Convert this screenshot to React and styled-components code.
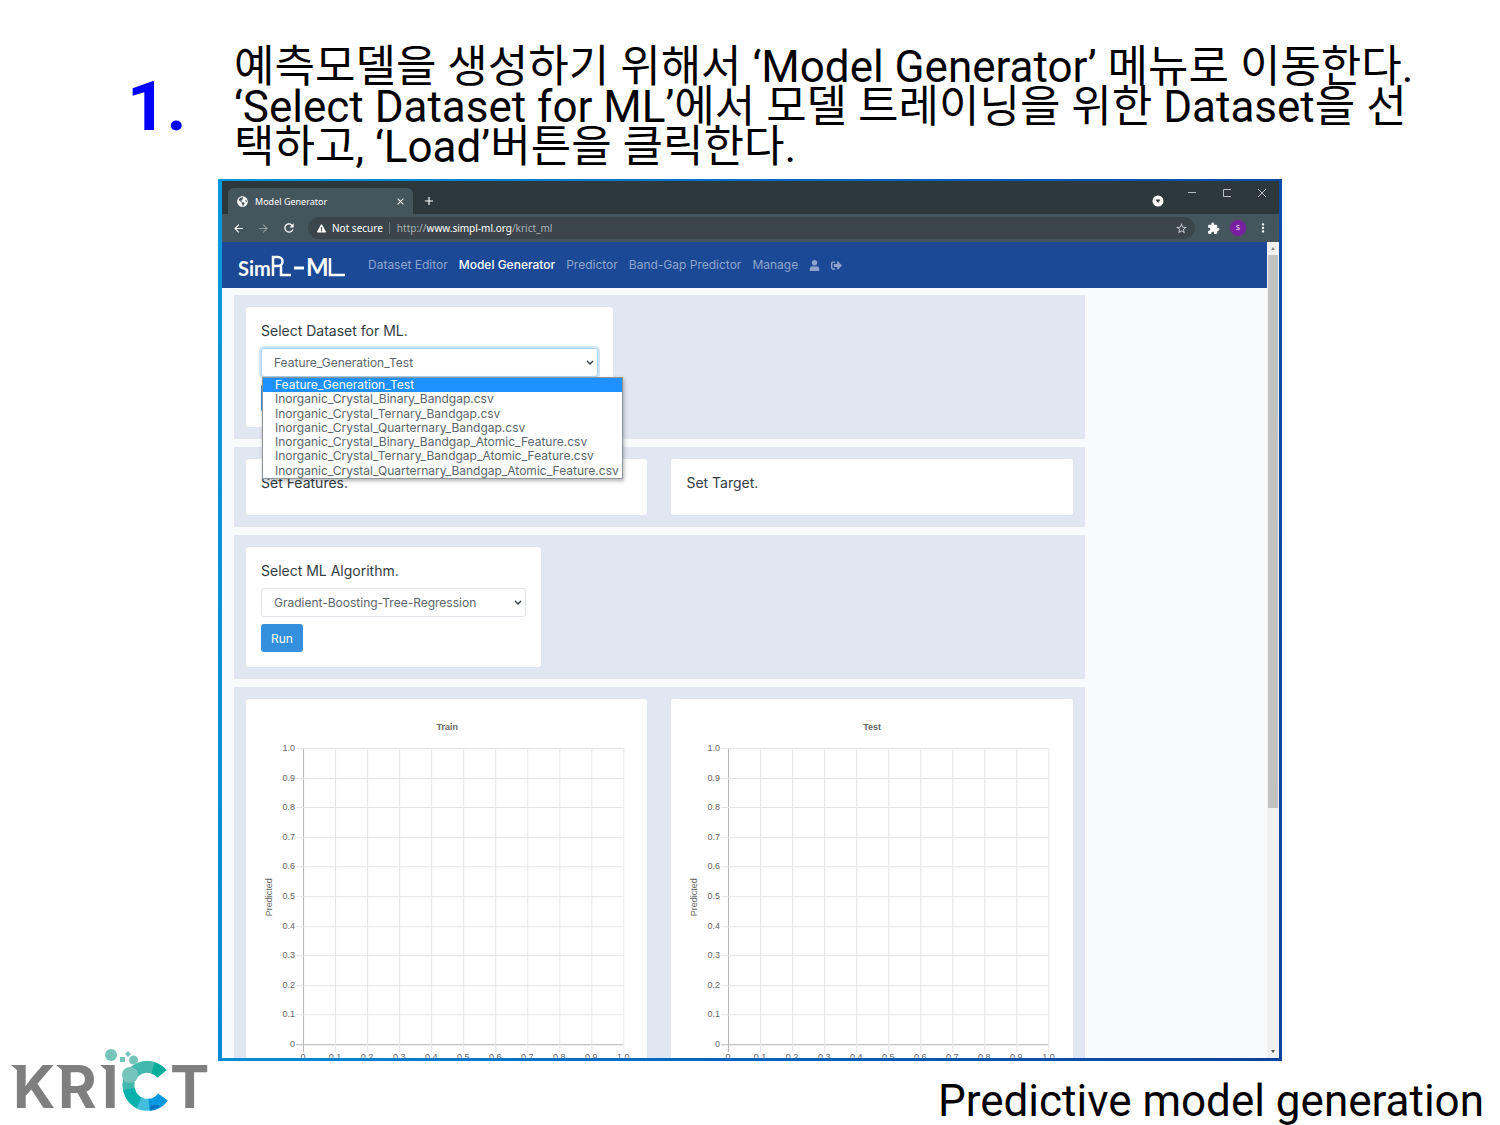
import styled, { createGlobalStyle, css } from "styled-components"
import { useState } from "react"
import { FaUser, FaSignOutAlt, FaExclamationTriangle, FaGlobeAmericas } from "react-icons/fa"
import { MdArrowBack, MdArrowForward, MdRefresh, MdStarBorder, MdMoreVert, MdAdd, MdClose, MdExtension } from "react-icons/md"

const GlobalStyle = createGlobalStyle`
  * {
    box-sizing: border-box;
  }

  body {
    margin: 0;
    background-color: #ffffff;
    color: #000000;
    font-family: Roboto, "Noto Sans CJK KR", sans-serif;
  }

  button, select {
    font-family: inherit;
  }
`

const Slide = styled.div`
  height: 100vh;
  min-height: 600px;
  display: flex;
  flex-direction: column;
  overflow: hidden;
`

/* ---------- slide heading ---------- */

const Heading = styled.header`
  display: flex;
  padding: 47px 0 12px;
`

const Step = styled.div`
  flex: 0 0 234px;
  padding-left: 127px;
  font-size: 69px;
  line-height: 120px;
  font-weight: 700;
  color: #0000ff;
`

const Instruction = styled.h1`
  flex: 1;
  margin: 0;
  font-size: 44px;
  line-height: 40px;
  font-weight: 400;
  white-space: nowrap;
`

const InstructionLine = styled.span`
  display: block;
`

/* ---------- browser window ---------- */

const Desktop = styled.main`
  flex: 1;
  min-height: 0;
  margin: 0 218px;
  padding: 2px 3px 3px 4px;
  display: flex;
  background: linear-gradient(100deg, #0a98dc, #0568bf 50%, #0a429f);
`

const Browser = styled.div`
  flex: 1;
  min-width: 0;
  display: flex;
  flex-direction: column;
  overflow: hidden;
  font-family: "Noto Sans", sans-serif;
`

const TabBar = styled.div`
  height: 33px;
  flex: none;
  display: flex;
  align-items: flex-end;
  padding: 0 12px 0 6px;
  background-color: #2d383d;
  color: #ffffff;
`

const Tab = styled.div`
  width: 185px;
  height: 26px;
  display: flex;
  align-items: center;
  gap: 7px;
  padding: 0 7px 0 9px;
  border-radius: 6px 6px 0 0;
  background-color: #45555d;
  font-size: 9px;
`

const TabTitle = styled.span`
  flex: 1;
`

const IconButton = styled.button`
  display: flex;
  align-items: center;
  justify-content: center;
  padding: 0;
  border: none;
  background: none;
  color: ${props => props.$color || "#ffffff"};
`

const NewTab = styled(IconButton)`
  height: 26px;
  margin-left: 9px;
`

const TabSearch = styled(IconButton)`
  height: 26px;
  margin-left: auto;
`

const WindowButtons = styled.div`
  display: flex;
  gap: 25px;
  margin-left: 23px;
  align-self: flex-start;
  padding-top: 7px;
`

const Toolbar = styled.div`
  height: 28px;
  flex: none;
  display: flex;
  align-items: center;
  gap: 12px;
  padding: 0 9px 0 10px;
  background-color: #45555d;
`

const AddressBar = styled.div`
  flex: 1;
  height: 22px;
  display: flex;
  align-items: center;
  padding: 0 7px 0 9px;
  border-radius: 11px;
  background-color: #3a464c;
  color: #a9b1b5;
  font-size: 10px;
  white-space: nowrap;
`

const Toolset = styled.div`
  display: flex;
  align-items: center;
  gap: 10px;
`

const NotSecure = styled.span`
  margin-left: 6px;
  padding-right: 6px;
  border-right: 1px solid #68757b;
  line-height: 12px;
  color: #ffffff;
`

const Url = styled.span`
  flex: 1;
  padding-left: 7px;
`

const Host = styled.span`
  color: #ffffff;
`

const Avatar = styled.button`
  width: 16px;
  height: 16px;
  padding: 0;
  border: none;
  border-radius: 50%;
  background-color: #7b1fa2;
  color: #ffffff;
  font-size: 7px;
  line-height: 16px;
`

const Viewport = styled.div`
  flex: 1;
  min-height: 0;
  display: flex;
`

const Page = styled.div`
  flex: 1;
  min-width: 0;
  overflow: hidden;
  background-color: #f9fafc;
  font-family: Inter, sans-serif;
`

const ScrollBar = styled.div`
  flex: 0 0 12px;
  display: flex;
  flex-direction: column;
  align-items: center;
  background-color: #f1f1f1;
`

const ScrollArrow = styled.svg`
  flex: none;
  width: 12px;
  height: 13px;
`

const ScrollTrack = styled.div`
  flex: 1;
  width: 10px;
`

const ScrollThumb = styled.div`
  height: 70%;
  background-color: #c1c1c1;
`

/* ---------- site ---------- */

const Navbar = styled.nav`
  height: 46px;
  display: flex;
  align-items: center;
  padding: 0 16px;
  background-color: #1c4996;
`

const Brand = styled.a`
  display: flex;
  margin-right: 22px;
`

const NavLinks = styled.div`
  display: flex;
  align-items: center;
  gap: 11px;
`

const NavLink = styled.a`
  display: flex;
  font-size: 12px;
  line-height: 16px;
  text-decoration: none;
  color: #8fa5cd;
  white-space: nowrap;

  ${props => props.$active && css`
    color: #ffffff;
    font-weight: 500;
  `}
`

const Content = styled.div`
  display: grid;
  grid-template-columns: 10fr 2fr;
  padding: 7px 12px;
`

const Panels = styled.div`
  display: flex;
  flex-direction: column;
  gap: 8px;
`

const Panel = styled.section`
  display: grid;
  grid-template-columns: ${props => props.$split ? "1fr 1fr" : "max-content"};
  gap: 24px;
  padding: 12px;
  background-color: #e1e7f2;
`

const Card = styled.div`
  padding: ${props => props.$flush ? "0" : "16px 15px 15px"};
  border-radius: 3px;
  background-color: #ffffff;
`

const titleStyle = css`
  display: block;
  margin: 0 0 9px;
  font-size: 14px;
  line-height: 16px;
  font-weight: 400;
  color: #343c44;
`

const CardLabel = styled.label`${titleStyle}`

const CardTitle = styled.h2`${titleStyle}`

const SelectWrap = styled.div`
  position: relative;
  width: ${props => props.$wide ? "337px" : "265px"};
  margin-bottom: 7px;
`

const Select = styled.select`
  display: block;
  width: 100%;
  height: 29px;
  padding: 0 12px;
  border: 1px solid #dfe3e8;
  border-radius: 3px;
  appearance: none;
  background-color: #ffffff;
  color: #5d656d;
  font-size: 12px;

  ${props => props.$focused && css`
    border-color: #a9d4f3;
    box-shadow: 0 0 0 2px #cfe5f6;
  `}
`

const Chevron = styled.svg`
  position: absolute;
  right: 4px;
  top: 12px;
  width: 8px;
  height: 6px;
  pointer-events: none;
`

const OptionList = styled.ul`
  position: absolute;
  z-index: 2;
  top: 100%;
  left: 1px;
  height: 102px;
  display: grid;
  grid-auto-rows: 1fr;
  margin: 0;
  padding: 0;
  border: 1px solid #8d949a;
  background-color: #ffffff;
  box-shadow: 1px 2px 4px rgba(0, 0, 0, 0.3);
  list-style: none;
`

const Option = styled.li`
  width: 359px;
  padding-left: 12px;
  font-size: 12px;
  line-height: 14px;
  white-space: nowrap;
  color: ${props => props.$selected ? "#ffffff" : "#5d656d"};
  background-color: ${props => props.$selected ? "#1e90ff" : "transparent"};
`

const Button = styled.button`
  display: block;
  height: 28px;
  padding: 0 10px;
  border: none;
  border-radius: 3px;
  background-color: #3490dc;
  color: #ffffff;
  font-size: 12px;
`

const ChartSvg = styled.svg`
  display: block;
  width: 100%;
  font-family: "Liberation Sans", sans-serif;
  font-size: 9px;
  fill: #666666;
`

/* ---------- slide footer ---------- */

const Footer = styled.footer`
  flex: 0 0 64px;
  display: flex;
  align-items: flex-end;
  justify-content: space-between;
  padding: 0 16px 0 8px;
`

const Caption = styled.p`
  margin: 0;
  font-size: 44px;
  line-height: 48px;
`

const LogoSvg = styled.svg`
  flex: none;
  width: 204px;
  height: 80px;
  margin-top: -16px;
`

const links = ["Dataset Editor", "Model Generator", "Predictor", "Band-Gap Predictor", "Manage"]

const datasets = [
  "Feature_Generation_Test",
  "Inorganic_Crystal_Binary_Bandgap.csv",
  "Inorganic_Crystal_Ternary_Bandgap.csv",
  "Inorganic_Crystal_Quarternary_Bandgap.csv",
  "Inorganic_Crystal_Binary_Bandgap_Atomic_Feature.csv",
  "Inorganic_Crystal_Ternary_Bandgap_Atomic_Feature.csv",
  "Inorganic_Crystal_Quarternary_Bandgap_Atomic_Feature.csv",
]

const ticks = ["0", "0.1", "0.2", "0.3", "0.4", "0.5", "0.6", "0.7", "0.8", "0.9", "1.0"]

const SimplLogo = () => (
  <svg width="108" height="26" viewBox="0 0 108 26" fill="#ffffff" role="img" aria-label="SimPL-ML">
    <g fontFamily="Lato, sans-serif" fontWeight="700">
      <text x="0" y="24" fontSize="20">Sim</text>
      <text x="68" y="24" fontSize="24">M</text>
    </g>
    <g fill="none" stroke="#ffffff" strokeWidth="3">
      <path d="M35 24V5h5a4 4 0 0 1 0 9h-5M43 13v10h10" strokeWidth="2.500" />
      <path d="M56 16h10" />
      <path d="M92 6v17h15" strokeWidth="2.500" />
    </g>
  </svg>
)

const KrictLogo = () => (
  <LogoSvg viewBox="8 1045 204 80" role="img" aria-label="KRICT">
    <g fill="#7f7f7f" fontFamily="Inter, sans-serif" fontWeight="700" fontSize="59">
      <text y="1108" x="13 58 102 170">KRIT</text>
      <path d="M11 1065h10v14h-4v-9zM56 1065h10v14h-4v-9zM100 1065h10v14h-4v-9z" />
    </g>
    <g fill="#75c5bd">
      <circle cx="111" cy="1055" r="6" />
      <rect x="120" y="1057" width="5" height="5" />
      <path d="M128 1051l3 3-3 3-3-3z" />
      <circle cx="133.500" cy="1060" r="4.500" />
    </g>
    <g fill="none" strokeWidth="12">
      <path d="M130 1078a19 19 0 0 1 24-10" stroke="#43b9ae" />
      <path d="M153 1068a19 19 0 0 1 9 6" stroke="#06ad99" />
      <path d="M129 1090a19 19 0 0 1 0-10" stroke="#43b9ae" />
      <path d="M142 1104a19 19 0 0 1-13-15" stroke="#06b0ac" />
      <path d="M152 1104a19 19 0 0 1-13-1" stroke="#43bfdc" />
      <path d="M163 1097a19 19 0 0 1-14 8" stroke="#0a98de" />
    </g>
    <path d="M151 1105h7l2 2-7 3h-3z" fill="#0573c4" />
    <circle cx="130" cy="1075" r="8" fill="#75c5bd" />
  </LogoSvg>
)

const SelectArrow = () => (
  <Chevron viewBox="0 0 8 6">
    <path d="M1 1l3 3 3-3" fill="none" stroke="#3b444c" strokeWidth="1.500" />
  </Chevron>
)

// empty scatter chart, both axes run from 0 to 1
const Chart = ({ title }) => {
  const left = 57
  const top = 49
  const width = 320
  const height = 296

  return (
    <ChartSvg viewBox="0 0 401 390">
      <text x={left + width / 2 - 16} y="31" textAnchor="middle" fontWeight="700">{title}</text>
      <text transform="translate(26 198) rotate(-90)" textAnchor="middle">Predicted</text>
      {ticks.map((tick, i) => {
        const x = left + Math.round(width * i / 10)
        const y = top + Math.round(height * (10 - i) / 10)
        return (
          <g key={tick}>
            <path
              d={`M${x + 0.5} ${top}V${top + height + 8}`}
              stroke={i === 0 ? "#b5b5b5" : "#e5e5e5"}
            />
            <path
              d={`M${left - 7} ${y + 0.5}H${left + width}`}
              stroke={i === 0 ? "#b5b5b5" : "#e5e5e5"}
            />
            <text x={left - 8} y={y + 3} textAnchor="end">{tick}</text>
            <text x={x} y={top + height + 16} textAnchor="middle">{tick}</text>
          </g>
        )
      })}
    </ChartSvg>
  )
}

const BrowserChrome = () => (
  <>
    <TabBar>
      <Tab>
        <FaGlobeAmericas size={11} />
        <TabTitle>Model Generator</TabTitle>
        <IconButton aria-label="Close tab"><MdClose size={11} /></IconButton>
      </Tab>
      <NewTab aria-label="New tab"><MdAdd size={14} /></NewTab>
      <TabSearch aria-label="Search tabs">
        <svg width="12" height="12" viewBox="0 0 12 12">
          <circle cx="6" cy="6" r="5.500" fill="#ffffff" />
          <path d="M3.500 4.500h5L6 8z" fill="#2d383d" />
        </svg>
      </TabSearch>
      <WindowButtons>
        <IconButton aria-label="Minimize">
          <svg width="10" height="10" viewBox="0 0 10 10"><path d="M1 4.500h8" stroke="#b9bfc2" /></svg>
        </IconButton>
        <IconButton aria-label="Maximize">
          <svg width="10" height="10" viewBox="0 0 10 10"><path d="M9 1.500H1.500v7H9" fill="none" stroke="#b9bfc2" /></svg>
        </IconButton>
        <IconButton aria-label="Close">
          <svg width="10" height="10" viewBox="0 0 10 10"><path d="M1 1l8 8M9 1l-8 8" stroke="#b9bfc2" /></svg>
        </IconButton>
      </WindowButtons>
    </TabBar>
    <Toolbar>
      <IconButton aria-label="Back"><MdArrowBack size={13} /></IconButton>
      <IconButton aria-label="Forward" $color="#929ca1"><MdArrowForward size={13} /></IconButton>
      <IconButton aria-label="Reload"><MdRefresh size={14} /></IconButton>
      <AddressBar>
        <FaExclamationTriangle size={9} color="#ffffff" />
        <NotSecure>Not secure</NotSecure>
        <Url>http://<Host>www.simpl-ml.org</Host>/krict_ml</Url>
        <IconButton aria-label="Bookmark" $color="#c3c9cc"><MdStarBorder size={13} /></IconButton>
      </AddressBar>
      <Toolset>
        <IconButton aria-label="Extensions"><MdExtension size={13} /></IconButton>
        <Avatar>S</Avatar>
        <IconButton aria-label="Menu"><MdMoreVert size={14} /></IconButton>
      </Toolset>
    </Toolbar>
  </>
)

const ModelGenerator = () => {
  const [dataset, setDataset] = useState(datasets[0]);
  const [open, setOpen] = useState(true);

  return (
    <Panels>
      <Panel>
        <Card>
          <CardLabel htmlFor="dataset">Select Dataset for ML.</CardLabel>
          <SelectWrap $wide>
            <Select id="dataset" $focused={open} value={dataset} onChange={e => setDataset(e.target.value)}>
              {datasets.map(name => <option key={name}>{name}</option>)}
            </Select>
            <SelectArrow />
            {open &&
              <OptionList role="listbox">
                {datasets.map(name => (
                  <Option
                    key={name}
                    role="option"
                    aria-selected={name === dataset}
                    $selected={name === dataset}
                    onClick={() => {
                      setDataset(name)
                      setOpen(false)
                    }}
                  >
                    {name}
                  </Option>
                ))}
              </OptionList>
            }
          </SelectWrap>
          <Button>Load</Button>
        </Card>
      </Panel>

      <Panel $split>
        <Card>
          <CardTitle>Set Features.</CardTitle>
        </Card>
        <Card>
          <CardTitle>Set Target.</CardTitle>
        </Card>
      </Panel>

      <Panel>
        <Card>
          <CardLabel htmlFor="algorithm">Select ML Algorithm.</CardLabel>
          <SelectWrap>
            <Select id="algorithm">
              <option>Gradient-Boosting-Tree-Regression</option>
            </Select>
            <SelectArrow />
          </SelectWrap>
          <Button>Run</Button>
        </Card>
      </Panel>

      <Panel $split>
        <Card $flush><Chart title="Train" /></Card>
        <Card $flush><Chart title="Test" /></Card>
      </Panel>
    </Panels>
  )
}

const App = () => {
  return (
    <Slide>
      <GlobalStyle />
      <Heading>
        <Step>1.</Step>
        <Instruction lang="ko">
          <InstructionLine>예측모델을 생성하기 위해서 ‘Model Generator’ 메뉴로 이동한다.</InstructionLine>
          <InstructionLine>‘Select Dataset for ML’에서 모델 트레이닝을 위한 Dataset을 선</InstructionLine>
          <InstructionLine>택하고, ‘Load’버튼을 클릭한다.</InstructionLine>
        </Instruction>
      </Heading>

      <Desktop>
        <Browser>
          <BrowserChrome />
          <Viewport>
            <Page>
              <Navbar>
                <Brand href="#"><SimplLogo /></Brand>
                <NavLinks>
                  {links.map(link => (
                    <NavLink key={link} href="#" $active={link === "Model Generator"}>{link}</NavLink>
                  ))}
                  <NavLink href="#" aria-label="Account"><FaUser size={11} /></NavLink>
                  <NavLink href="#" aria-label="Log out"><FaSignOutAlt size={11} /></NavLink>
                </NavLinks>
              </Navbar>
              <Content>
                <ModelGenerator />
              </Content>
            </Page>
            <ScrollBar>
              <ScrollArrow viewBox="0 0 12 13"><path d="M4 8l2-3 2 3z" fill="#8a8a8a" /></ScrollArrow>
              <ScrollTrack><ScrollThumb /></ScrollTrack>
              <ScrollArrow viewBox="0 0 12 13"><path d="M4 5l2 3 2-3z" fill="#505050" /></ScrollArrow>
            </ScrollBar>
          </Viewport>
        </Browser>
      </Desktop>

      <Footer>
        <KrictLogo />
        <Caption>Predictive model generation</Caption>
      </Footer>
    </Slide>
  )
}

export default App
